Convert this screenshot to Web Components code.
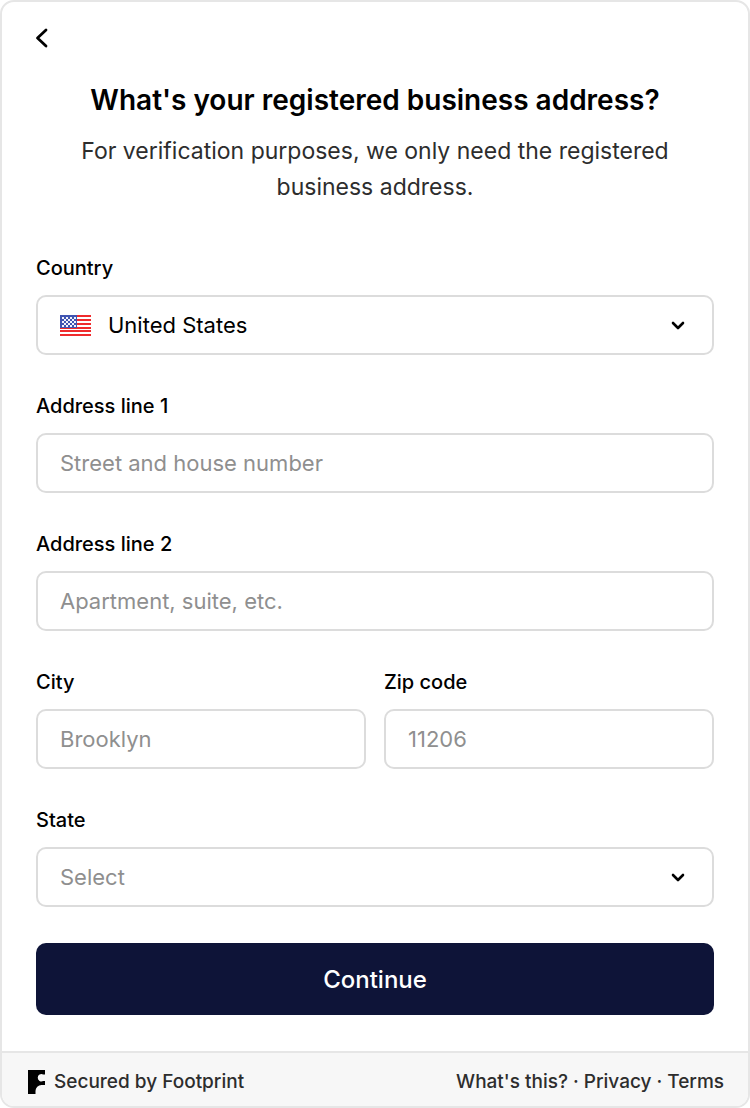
<!DOCTYPE html>
<html lang="en">
<head>
<meta charset="utf-8">
<meta name="viewport" content="width=device-width, initial-scale=1">
<title>Business address</title>
<style>
  body {
    margin: 0;
    background: #fff;
    color: #000;
    font-family: Inter, "Liberation Sans", sans-serif;
  }
</style>
</head>
<body>
<address-card>
  <back-button slot="nav"></back-button>
  <page-heading slot="heading">
    <span slot="title">What's your registered business address?</span>
    <span slot="subtitle">For verification purposes, we only need the registered business address.</span>
  </page-heading>
  <select-field label="Country" value="United States" options="United States,Canada,Mexico" flag></select-field>
  <text-field label="Address line 1" placeholder="Street and house number" autocomplete="address-line1"></text-field>
  <text-field label="Address line 2" placeholder="Apartment, suite, etc." autocomplete="address-line2"></text-field>
  <field-row>
    <text-field label="City" placeholder="Brooklyn" autocomplete="address-level2"></text-field>
    <text-field label="Zip code" placeholder="11206" autocomplete="postal-code"></text-field>
  </field-row>
  <select-field label="State" placeholder="Select" options="California,New York,Texas"></select-field>
  <submit-button>Continue</submit-button>
  <secured-footer slot="footer"></secured-footer>
</address-card>

<script>
(function() {
  // Shared by every labelled control
  const FIELD_STYLES = `
    :host { display: block; min-width: 0; }
    .field { display: flex; flex-direction: column; gap: 12px; }
    label { font-size: 20px; line-height: 30px; font-weight: 500; }
    input, select {
      box-sizing: border-box;
      width: 100%;
      height: 60px;
      margin: 0;
      padding: 0 22px;
      border: 2px solid #dcdcdc;
      border-radius: 10px;
      background: #fff;
      color: #000;
      font: inherit;
      font-size: 22px;
    }
    input::placeholder { color: #8f8f8f; opacity: 1; }
    input:focus, select:focus { outline: none; border-color: #0e1438; }
  `;

  function flagSvg() {
    const stripes = [0, 4, 8, 12, 15, 19].map(y => `<rect y="${y}" width="31" height="2"/>`).join('');
    let stars = '';
    for (let row = 0; row < 5; row++) {
      const odd = row % 2;
      for (let col = 0; col < (odd ? 3 : 4); col++) {
        stars += `<rect x="${2 + col * 4 + odd * 2}" y="${2 + row * 2}" width="2" height="2"/>`;
      }
    }
    return `
      <svg class="flag" width="31" height="21" viewBox="0 0 31 21" aria-hidden="true">
        <rect width="31" height="21" fill="#fff"/>
        <g fill="#ef2b2d">${stripes}</g>
        <rect width="17" height="13" fill="#4055b2"/>
        <g fill="#f3f4fb">${stars}</g>
      </svg>`;
  }

  class AddressCard extends HTMLElement {
    constructor() {
      super();
      this.attachShadow({ mode: 'open' }).innerHTML = `
        <style>
          :host {
            display: block;
            box-sizing: border-box;
            border: 2px solid #e6e6e6;
            border-radius: 14px;
            background: #fff;
            overflow: hidden;
          }
          nav { display: flex; padding: 18px 22px 0; }
          form {
            display: flex;
            flex-direction: column;
            gap: 36px;
            padding: 48px 34px 36px;
          }
        </style>
        <nav><slot name="nav"></slot></nav>
        <slot name="heading"></slot>
        <form><slot></slot></form>
        <slot name="footer"></slot>
      `;
    }
  }

  class BackButton extends HTMLElement {
    constructor() {
      super();
      this.attachShadow({ mode: 'open' }).innerHTML = `
        <style>
          :host { display: block; }
          button {
            display: grid;
            place-items: center;
            width: 36px;
            height: 36px;
            padding: 0;
            border: 0;
            background: none;
            cursor: pointer;
          }
        </style>
        <button type="button" aria-label="Back">
          <svg width="36" height="36" viewBox="0 0 36 36" fill="none" stroke="#000" stroke-width="2.8" stroke-linecap="round" stroke-linejoin="round">
            <path d="M22 10 13.500 18 22 26"/>
          </svg>
        </button>
      `;
    }
  }

  class PageHeading extends HTMLElement {
    constructor() {
      super();
      this.attachShadow({ mode: 'open' }).innerHTML = `
        <style>
          :host { display: block; padding: 24px 34px 0; text-align: center; }
          h1 { margin: 0 0 13px; font-size: 28px; line-height: 40px; font-weight: 600; }
          p { margin: 0; color: #2d2d2d; font-size: 23px; line-height: 36px; }
        </style>
        <h1><slot name="title"></slot></h1>
        <p><slot name="subtitle"></slot></p>
      `;
    }
  }

  class FieldRow extends HTMLElement {
    constructor() {
      super();
      this.attachShadow({ mode: 'open' }).innerHTML = `
        <style>
          :host { display: grid; grid-template-columns: 1fr 1fr; gap: 18px; }
        </style>
        <slot></slot>
      `;
    }
  }

  class TextField extends HTMLElement {
    constructor() {
      super();
      this.attachShadow({ mode: 'open' });
    }

    connectedCallback() {
      const label = this.getAttribute('label');
      const placeholder = this.getAttribute('placeholder') || '';
      const autocomplete = this.getAttribute('autocomplete') || 'off';

      this.shadowRoot.innerHTML = `
        <style>${FIELD_STYLES}</style>
        <div class="field">
          <label for="control">${label}</label>
          <input id="control" type="text" placeholder="${placeholder}" autocomplete="${autocomplete}">
        </div>
      `;
    }
  }

  class SelectField extends HTMLElement {
    constructor() {
      super();
      this.attachShadow({ mode: 'open' });
    }

    connectedCallback() {
      const label = this.getAttribute('label');
      const value = this.getAttribute('value');
      const placeholder = this.getAttribute('placeholder');
      const options = this.getAttribute('options').split(',');
      const flag = this.hasAttribute('flag');

      // The icons share the select's grid cell and let clicks through
      this.shadowRoot.innerHTML = `
        <style>
          ${FIELD_STYLES}
          .control { display: grid; align-items: center; }
          .control > * { grid-area: 1 / 1; }
          select { appearance: none; cursor: pointer; }
          select:invalid { color: #8f8f8f; }
          option { color: #000; }
          svg { pointer-events: none; }
          .flag { margin-left: 24px; }
          .with-flag select { padding-left: 70px; }
          .chevron { justify-self: end; margin-right: 24px; }
        </style>
        <div class="field">
          <label for="control">${label}</label>
          <div class="control ${flag ? 'with-flag' : ''}">
            <select id="control" required>
              ${placeholder ? `<option value="" disabled selected hidden>${placeholder}</option>` : ''}
              ${options.map(o => `<option ${o === value ? 'selected' : ''}>${o}</option>`).join('')}
            </select>
            ${flag ? flagSvg() : ''}
            <svg class="chevron" width="24" height="24" viewBox="0 0 24 24" fill="none" stroke="#000" stroke-width="2.6" stroke-linecap="round" stroke-linejoin="round" aria-hidden="true">
              <path d="M7 10 12 15 17 10"/>
            </svg>
          </div>
        </div>
      `;
    }
  }

  class SubmitButton extends HTMLElement {
    constructor() {
      super();
      this.attachShadow({ mode: 'open' }).innerHTML = `
        <style>
          :host { display: block; }
          button {
            width: 100%;
            height: 72px;
            border: 0;
            border-radius: 10px;
            background: #0e1438;
            color: #fff;
            font: inherit;
            font-size: 24px;
            font-weight: 500;
            cursor: pointer;
          }
        </style>
        <button type="button"><slot></slot></button>
      `;
    }
  }

  class SecuredFooter extends HTMLElement {
    constructor() {
      super();
      this.attachShadow({ mode: 'open' }).innerHTML = `
        <style>
          :host {
            display: flex;
            flex-wrap: wrap;
            align-items: center;
            justify-content: space-between;
            padding: 14px 24px 9px 26px;
            border-top: 2px solid #e6e6e6;
            background: #f7f7f7;
            color: #2d2d2d;
            font-size: 19px;
            line-height: 30px;
            font-weight: 500;
          }
          a { color: inherit; text-decoration: none; }
          .brand { display: flex; align-items: center; gap: 9px; }
          .links { display: flex; gap: 5px; }
        </style>
        <a class="brand" href="#footprint">
          <svg width="17" height="24" viewBox="0 0 17 24" fill="#000" aria-hidden="true">
            <path d="M0 0H17V4.500H15.200A3.700 3.700 0 1 0 15.200 11H17V15H13.500A6 6 0 0 0 7.500 21V24H0Z"/>
          </svg>
          <span>Secured by Footprint</span>
        </a>
        <div class="links">
          <a href="#about">What's this?</a><span>·</span><a href="#privacy">Privacy</a><span>·</span><a href="#terms">Terms</a>
        </div>
      `;
    }
  }

  customElements.define('address-card', AddressCard);
  customElements.define('back-button', BackButton);
  customElements.define('page-heading', PageHeading);
  customElements.define('field-row', FieldRow);
  customElements.define('text-field', TextField);
  customElements.define('select-field', SelectField);
  customElements.define('submit-button', SubmitButton);
  customElements.define('secured-footer', SecuredFooter);
})();
</script>
</body>
</html>
